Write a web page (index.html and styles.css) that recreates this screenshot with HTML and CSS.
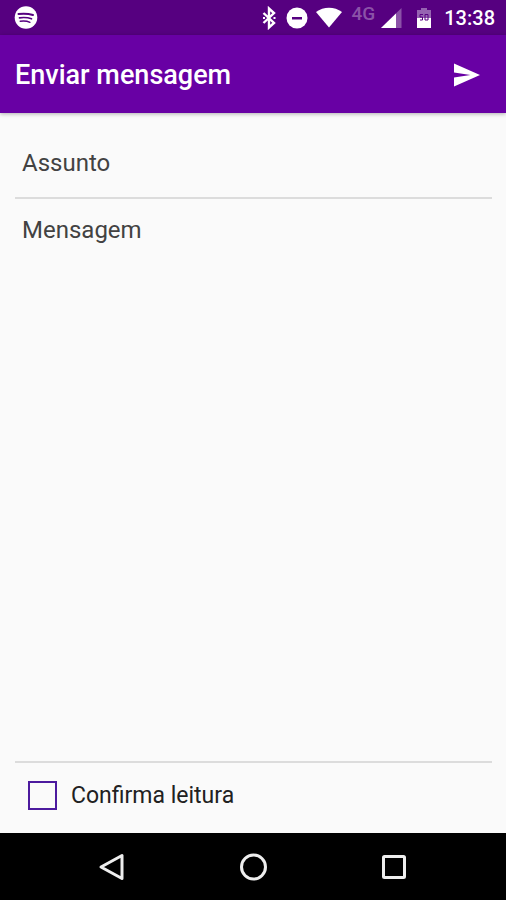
FILE: index.html
```html
<!DOCTYPE html>
<html lang="pt-BR">
<head>
    <meta charset="UTF-8">
    <meta name="viewport" content="width=device-width, initial-scale=1.0">
    <title>Enviar mensagem</title>
    <link rel="stylesheet" href="styles.css">
</head>
<body>
    <div class="status-bar">
        <svg class="app-icon" width="24" height="24" viewBox="0 0 24 24">
            <circle cx="12" cy="11.500" r="11.3" fill="#fff"/>
            <g fill="none" stroke="#560080" stroke-linecap="round">
                <path d="M4.500 8c5-.6 10-.4 14.500 1" stroke-width="2"/>
                <path d="M5.500 11.800c4.500-.6 8.500-.3 12 1" stroke-width="1.700"/>
                <path d="M6.200 15.200c3.700-.5 6.800-.3 9.800 1.100" stroke-width="1.400"/>
            </g>
        </svg>
        <div class="status-icons">
            <svg width="28" height="24" viewBox="0 0 28 24">
                <path d="M8.500 7L19 17l-5 4.500v-19L19 7 8.500 17" fill="none" stroke="#fff" stroke-width="2.400"/>
                <path d="M8 11h2v2H8zM18.500 11h2v2h-2z" fill="#fff"/>
            </svg>
            <svg width="28" height="24" viewBox="0 0 28 24">
                <circle cx="14" cy="12" r="10.500" fill="#fff"/>
                <path d="M9 11h10v2.500H9z" fill="#560080"/>
            </svg>
            <svg width="36" height="24" viewBox="0 0 36 24">
                <path d="M5 6C12.500.3 23.500.3 31 6L18 21.500z" fill="#fff"/>
            </svg>
            <span class="network">4G</span>
            <svg width="28" height="24" viewBox="0 0 28 24">
                <path d="M22.500 2v20H2z" fill="#8b52a8"/>
                <path d="M17 7.500V22H2z" fill="#fff"/>
            </svg>
            <svg width="32" height="24" viewBox="0 0 32 24">
                <path d="M14 2h6v2h4v18H10V4h4z" fill="#9563b1"/>
                <path d="M10 12h14v10H10z" fill="#fff"/>
                <path d="M16 8.500h-3v2.500h2.500v3H13M18 8.500h3V14h-3z" fill="none" stroke="#560080"/>
            </svg>
        </div>
        <span class="time">13:38</span>
    </div>

    <header class="app-bar">
        <h1>Enviar mensagem</h1>
        <button class="send" type="submit" form="message-form" aria-label="Enviar">
            <svg width="32" height="32" viewBox="0 0 32 32">
                <path d="M4 4.500L30 16 4 27.500v-9L20.500 16 4 13.500z" fill="#fff"/>
            </svg>
        </button>
    </header>

    <form class="message" id="message-form">
        <input class="subject" type="text" placeholder="Assunto" aria-label="Assunto">
        <textarea class="body" placeholder="Mensagem" aria-label="Mensagem"></textarea>
        <div class="confirm">
            <input type="checkbox" id="confirm-read">
            <label for="confirm-read">Confirma leitura</label>
        </div>
    </form>

    <nav class="nav-bar">
        <button type="button" aria-label="Voltar">
            <svg width="32" height="32" viewBox="0 0 32 32">
                <path d="M26 4.500v23L5 16z"/>
            </svg>
        </button>
        <button type="button" aria-label="Início">
            <svg width="32" height="32" viewBox="0 0 32 32">
                <circle cx="16.500" cy="16" r="12"/>
            </svg>
        </button>
        <button type="button" aria-label="Recentes">
            <svg width="32" height="32" viewBox="0 0 32 32">
                <rect x="5.500" y="5.500" width="21" height="21" rx="1"/>
            </svg>
        </button>
    </nav>
</body>
</html>
```

FILE: styles.css
```css
* {
    box-sizing: border-box;
}
body {
    display: flex;
    flex-direction: column;
    min-height: 100vh;
    margin: 0;
    background: #fafafa;
    color: #212121;
    font-family: Roboto, sans-serif;
}
button {
    display: flex;
    padding: 0;
    border: none;
    background: none;
    cursor: pointer;
}

/* Status bar */
.status-bar {
    display: flex;
    align-items: center;
    height: 35px;
    padding: 0 11px 0 14px;
    background: #560080;
    color: white;
}
.status-icons {
    display: flex;
    align-items: center;
    margin-left: auto;
}
.network {
    width: 32px;
    padding-bottom: 8px;
    color: #8b52a8;
    font-size: 19px;
    font-weight: 500;
    line-height: 20px;
    text-align: center;
}
.time {
    margin-left: 5px;
    font-size: 20px;
    font-weight: 500;
}

/* App bar */
.app-bar {
    display: flex;
    align-items: center;
    justify-content: space-between;
    height: 78px;
    padding: 2px 24px 0 15px;
    background: #6800a4;
    box-shadow: 0 1px 4px rgba(0, 0, 0, 0.3);
    color: white;
}
.app-bar h1 {
    margin: 0;
    font-size: 27px;
    font-weight: 500;
}

/* Message form */
.message {
    display: flex;
    flex: 1;
    flex-direction: column;
    padding: 14px 14px 0 15px;
}
.subject,
.body {
    width: 100%;
    border: none;
    border-bottom: 2px solid #dcdcdc;
    border-radius: 0;
    outline: none;
    background: none;
    color: #212121;
    font-family: inherit;
    font-size: 24px;
    line-height: 32px;
}
.subject {
    height: 72px;
    padding: 2px 7px 0;
}
.body {
    flex: 1;
    padding: 15px 7px;
    resize: none;
}
.subject::placeholder,
.body::placeholder {
    color: #424242;
}
.confirm {
    display: flex;
    align-items: center;
    gap: 14px;
    height: 70px;
    padding: 0 13px 6px;
    font-size: 23px;
}
.confirm input {
    width: 29px;
    height: 29px;
    margin: 0;
    border: 2px solid #4c1a9e;
    appearance: none;
}
.confirm input:checked {
    background: #4c1a9e;
}

/* Navigation bar */
.nav-bar {
    display: flex;
    align-items: center;
    justify-content: center;
    gap: 109px;
    height: 67px;
    background: black;
}
.nav-bar svg {
    fill: none;
    stroke: #eee;
    stroke-width: 3;
    stroke-linejoin: round;
}
```
